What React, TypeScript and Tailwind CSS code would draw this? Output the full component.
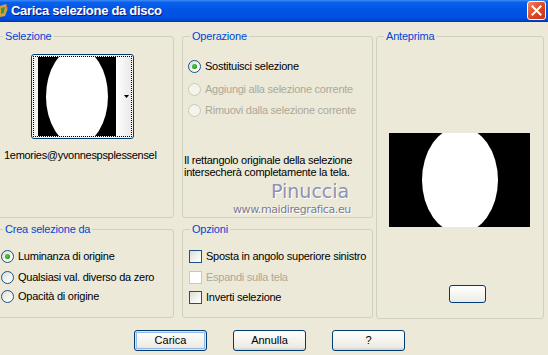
import type { ReactNode } from "react";

// Finestra "Carica selezione da disco" in stile Windows XP
const FONT = "font-['Liberation_Sans','DejaVu_Sans',sans-serif]";

const GroupBox = ({
  legend,
  className,
  children,
}: {
  legend: string;
  className: string;
  children: ReactNode;
}) => (
  <fieldset className={`relative border border-[#d0d0bf] rounded-[3px] p-0 m-0 ${className}`}>
    <legend className="ml-[7px] px-[2px] text-[11px] leading-[13px] tracking-[-0.2px] text-[#0046d5]">{legend}</legend>
    {children}
  </fieldset>
);

const Radio = ({ label, checked, disabled }: { label: string; checked?: boolean; disabled?: boolean }) => (
  <div className="flex items-center gap-[4px] h-[13px]">
    <span
      className={`w-[13px] h-[13px] shrink-0 rounded-full border flex items-center justify-center ${
        disabled
          ? "border-[#cac8bb] bg-[#f5f4ea]"
          : "border-[#1c5180] bg-[linear-gradient(135deg,#dcdcd7_0%,#f4f4f0_60%,#ffffff_100%)]"
      }`}
    >
      {checked && (
        <span className="w-[5px] h-[5px] rounded-full bg-[radial-gradient(circle_at_40%_40%,#55d655_0%,#21a121_60%,#1a8a1a_100%)]" />
      )}
    </span>
    <span
      className={`text-[11px] leading-[13px] tracking-[-0.25px] whitespace-nowrap ${
        disabled ? "text-[#aca899]" : "text-black"
      }`}
    >
      {label}
    </span>
  </div>
);

const Check = ({ label, disabled }: { label: string; disabled?: boolean }) => (
  <div className="flex items-center gap-[4px] h-[13px]">
    <span
      className={`w-[13px] h-[13px] shrink-0 border ${
        disabled
          ? "border-[#cac8bb] bg-white"
          : "border-[#1c5180] bg-[linear-gradient(135deg,#dcdcd7_0%,#f4f4f0_60%,#ffffff_100%)]"
      }`}
    />
    <span
      className={`text-[11px] leading-[13px] tracking-[-0.25px] whitespace-nowrap ${
        disabled ? "text-[#aca899]" : "text-black"
      }`}
    >
      {label}
    </span>
  </div>
);

const XpButton = ({ label, isDefault }: { label: string; isDefault?: boolean }) => (
  <button
    className={`w-[73px] h-[21px] rounded-[3px] border border-[#003c74] bg-[linear-gradient(to_bottom,#ffffff_0%,#f4f3ee_50%,#ecebe6_85%,#d6d0c5_100%)] text-[11px] leading-[13px] text-black ${
      isDefault ? "shadow-[inset_0_0_0_1px_#cee7ff,inset_0_0_0_2px_#98b8ea]" : ""
    }`}
  >
    {label}
  </button>
);

const App = () => {
  return (
    <div className={`w-[548px] h-[355px] overflow-hidden bg-[#ece9d8] ${FONT}`}>
      {/* barra del titolo */}
      <div className="h-[22px] flex items-center bg-[linear-gradient(to_bottom,#3d8bf6_0%,#0a5fea_12%,#0055e5_45%,#0052e2_80%,#0041c8_100%)] border-b border-[#0831b4]">
        <svg width="9" height="16" viewBox="0 0 9 16" className="shrink-0">
          <path d="M0 3 L6 1 L8 5 L5 13 L0 14 Z" fill="#d9a040" />
          <path d="M1 5 L5 4 L4 10 L1 11 Z" fill="#3a9a3a" />
          <path d="M6 1 L8 5 L7 7 Z" fill="#c83a2a" />
        </svg>
        <span className="ml-[2px] text-[13px] font-bold text-white tracking-[-0.3px] [text-shadow:1px_1px_0_#0a1883]">
          Carica selezione da disco
        </span>
        <div className="ml-auto mr-[2px] w-[19px] h-[19px] rounded-[3px] border border-white bg-[linear-gradient(135deg,#f08a6a_0%,#e0491f_50%,#c3341a_100%)] flex items-center justify-center">
          <svg width="11" height="11" viewBox="0 0 11 11">
            <path d="M1.5 1.5 L9.5 9.5 M9.5 1.5 L1.5 9.5" stroke="white" strokeWidth="2" strokeLinecap="square" />
          </svg>
        </div>
      </div>

      {/* contenuto */}
      <div className="flex mt-[8px] ml-[-5px]">
        {/* colonna sinistra */}
        <div className="w-[179px] flex flex-col">
          <GroupBox legend="Selezione" className="h-[188px]">
            <div className="mt-[11px] ml-[35px] w-[103px] h-[85px] rounded-[3px] border border-[#003c74] bg-[#f4f3ee] p-[1px]">
              <div className="h-full border border-dotted border-black flex pl-[4px]">
                <svg width="78" height="79" viewBox="0 0 78 79" className="shrink-0">
                  <rect width="78" height="79" fill="#000" />
                  <ellipse cx="39" cy="39.5" rx="31" ry="48.5" fill="#fff" />
                </svg>
                <div className="flex-1 bg-[linear-gradient(to_right,#ffffff,#e9e9e9)] flex items-center justify-end pr-[2px]">
                  <svg width="5" height="3" viewBox="0 0 5 3">
                    <path d="M0 0 H5 L2.5 3 Z" fill="#000" />
                  </svg>
                </div>
              </div>
            </div>
            <div className="mt-[10px] ml-[8px] text-[11px] leading-[13px] tracking-[-0.3px] text-black whitespace-nowrap">
              1emories@yvonnespsplessensel
            </div>
          </GroupBox>
          <GroupBox legend="Crea selezione da" className="mt-[5px] h-[95px]">
            <div className="ml-[5px] mt-[14px] flex flex-col">
              <Radio label="Luminanza di origine" checked />
              <div className="mt-[8px]">
                <Radio label="Qualsiasi val. diverso da zero" />
              </div>
              <div className="mt-[6px]">
                <Radio label="Opacità di origine" />
              </div>
            </div>
          </GroupBox>
        </div>

        {/* colonna centrale */}
        <div className="ml-[8px] w-[191px] flex flex-col">
          <GroupBox legend="Operazione" className="h-[188px]">
            <div className="ml-[5px] mt-[17px] flex flex-col">
              <Radio label="Sostituisci selezione" checked />
              <div className="mt-[10px]">
                <Radio label="Aggiungi alla selezione corrente" disabled />
              </div>
              <div className="mt-[8px]">
                <Radio label="Rimuovi dalla selezione corrente" disabled />
              </div>
            </div>
            <div className="mt-[37px] ml-[1px] text-[11px] leading-[12px] tracking-[-0.25px] text-black">
              Il rettangolo originale della selezione
              <br />
              intersecherà completamente la tela.
            </div>
            {/* filigrana */}
            <div className="absolute left-[88px] top-[140px] text-[19px] leading-[16px] text-[#8c92b4] font-['DejaVu_Sans',sans-serif] [text-shadow:1px_1px_0_#ffffff]">
              Pinuccia
            </div>
            <div className="absolute left-[50px] top-[161px] text-[11px] leading-[12px] tracking-[-0.4px] text-[#7a7c90] font-['DejaVu_Sans',sans-serif] [text-shadow:1px_1px_0_#ffffff]">
              www.maidiregrafica.eu
            </div>
          </GroupBox>
          <GroupBox legend="Opzioni" className="mt-[5px] h-[95px]">
            <div className="ml-[6px] mt-[14px] flex flex-col">
              <Check label="Sposta in angolo superiore sinistro" />
              <div className="mt-[8px]">
                <Check label="Espandi sulla tela" disabled />
              </div>
              <div className="mt-[7px]">
                <Check label="Inverti selezione" />
              </div>
            </div>
          </GroupBox>
        </div>

        {/* colonna destra */}
        <div className="ml-[3px] w-[168px]">
          <GroupBox legend="Anteprima" className="h-[289px]">
            <div className="mt-[90px] ml-[12px]">
              <svg width="141" height="94" viewBox="0 0 141 94">
                <rect width="141" height="94" fill="#000" />
                <ellipse cx="71" cy="47" rx="38" ry="53" fill="#fff" />
              </svg>
            </div>
            <div className="mt-[58px] ml-[72px] w-[37px] h-[18px] rounded-[3px] border border-[#003c74] bg-[linear-gradient(to_bottom,#ffffff,#ecebe6)]" />
          </GroupBox>
        </div>
      </div>

      {/* pulsanti */}
      <div className="mt-[11px] ml-[134px] flex gap-[26px]">
        <XpButton label="Carica" isDefault />
        <XpButton label="Annulla" />
        <XpButton label="?" />
      </div>
    </div>
  );
};

export default App;
